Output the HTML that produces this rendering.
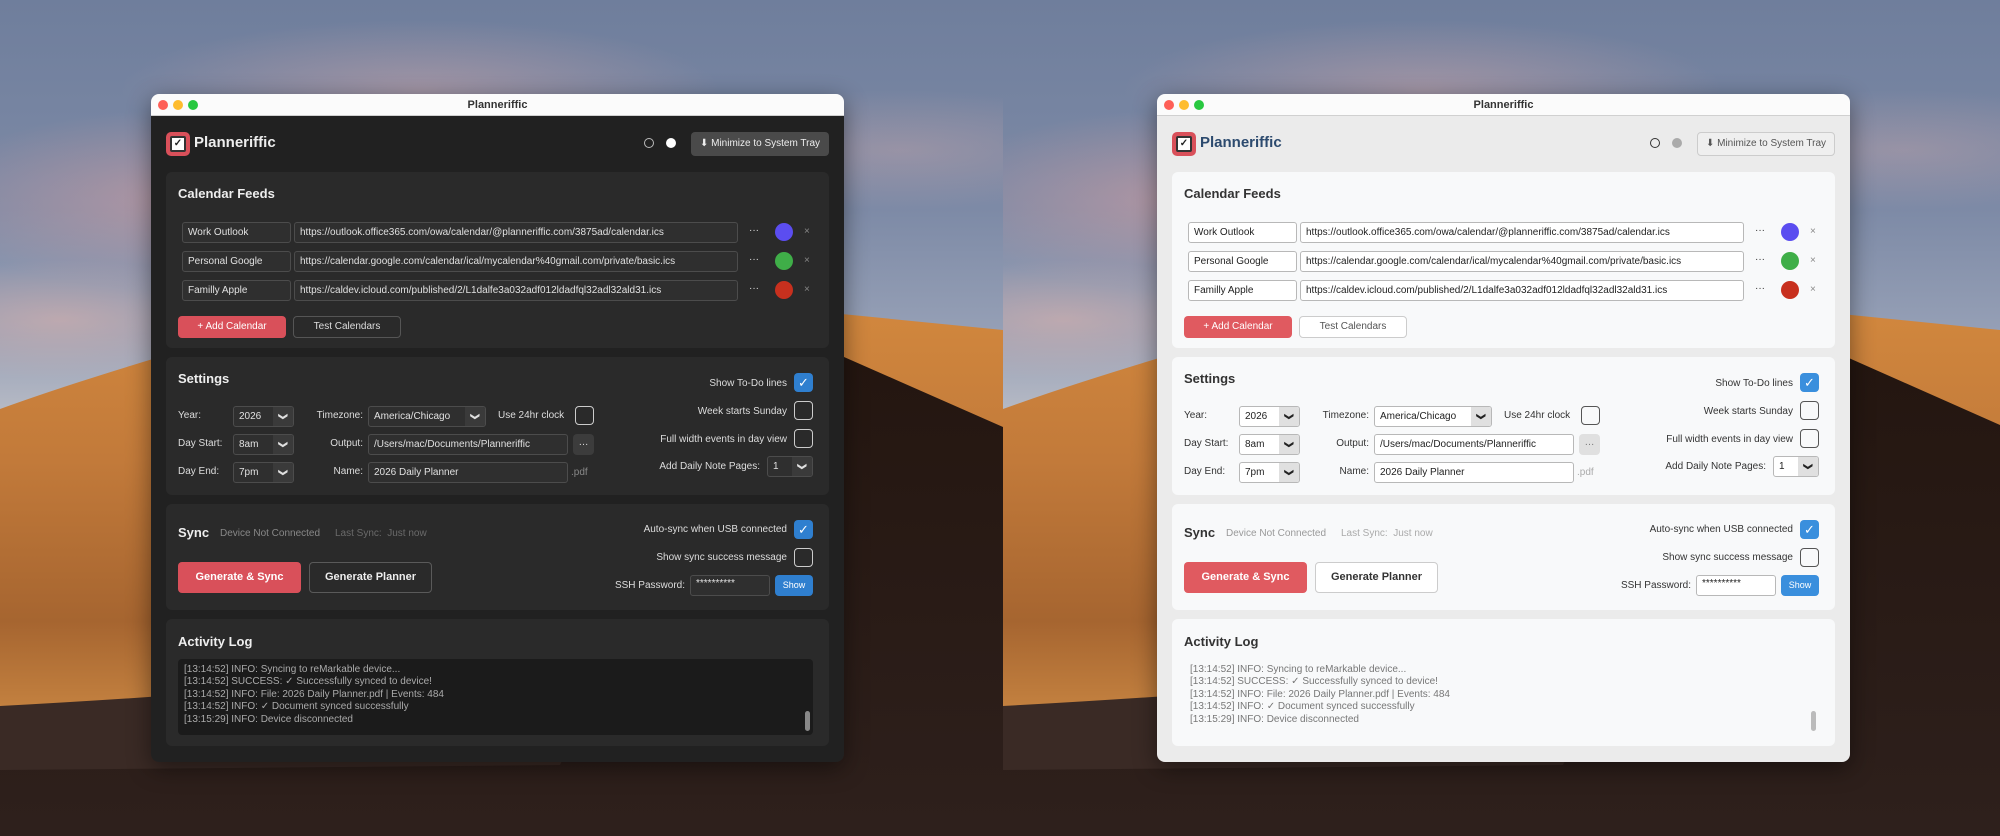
<!DOCTYPE html>
<html><head><meta charset="utf-8">
<style>
*{box-sizing:border-box;margin:0;padding:0}
body{width:2000px;height:836px;overflow:hidden;position:relative;font-family:"Liberation Sans",sans-serif;background:#2a1c18}
.half{position:absolute;top:0;width:1003px;height:836px;overflow:hidden}
.sky{position:absolute;inset:0;background:
 radial-gradient(ellipse 260px 90px at 180px 200px,rgba(220,160,160,.55),transparent),
 radial-gradient(ellipse 300px 70px at 420px 90px,rgba(215,170,170,.45),transparent),
 radial-gradient(ellipse 200px 60px at 60px 320px,rgba(230,180,170,.5),transparent),
 radial-gradient(ellipse 250px 60px at 900px 150px,rgba(210,170,170,.35),transparent),
 linear-gradient(180deg,#6f7e9c 0%,#7d8aa6 25%,#96a0b6 40%,#b9bcc6 50%,#c6c6cc 55%)}
.half svg{position:absolute;left:0;top:0}
.win{position:absolute;top:94px;width:693px;height:668px;border-radius:8px;overflow:hidden;box-shadow:0 6px 24px rgba(0,0,0,.45)}
.dark{color:#ddd}
.light{color:#333}
.tb{position:absolute;left:0;top:0;width:100%;height:22px;background:#fbfbfb;border-bottom:1px solid #d0d0d0;text-align:center;font-size:11px;font-weight:bold;line-height:22px;color:#333}
.tl{position:absolute;top:6px;width:10px;height:10px;border-radius:50%}
.a{position:absolute}
.panel{position:absolute;left:15px;width:663px;border-radius:6px}
.dark .panel{background:#2a2a2a}
.light .panel{background:#f8f9fa}
.h{position:absolute;font-size:13px;font-weight:bold}
.inp{position:absolute;height:21px;border-radius:3px;font-size:10px;line-height:19px;padding-left:5px;white-space:nowrap;overflow:hidden}
.dark .inp{background:#2f2f2f;border:1px solid #4c4c4c;color:#e0e0e0}
.light .inp{background:#fff;border:1px solid #b8b8b8;color:#222}
.sel .ar{position:absolute;right:0;top:0;width:20px;height:100%;font-size:9px;text-align:center;line-height:19px}
.sel .ar span{display:inline-block;transform:rotate(90deg);font-weight:bold}
.dark .sel .ar{background:#3a3a3a}
.light .sel .ar{background:#e0e0e0}
.lbl{position:absolute;font-size:10px;line-height:14px;white-space:nowrap}
.r{text-align:right}
.cb{position:absolute;width:19px;height:19px;border-radius:4px}
.dark .cb{border:1.5px solid #ccc}
.light .cb{border:1.5px solid #555}
.cb.on{background:#2f7fcf;border:none;color:#fff;text-align:center;font-size:13px;line-height:19px}
.light .cb.on{background:#3a8fdd}
.btn{position:absolute;border-radius:4px;text-align:center;font-size:10px}
.dot{position:absolute;width:18px;height:18px;border-radius:50%}
.muted{color:#888}
.log{position:absolute;left:27px;top:565px;width:635px;height:76px;border-radius:4px;font-size:10px;line-height:12.4px;padding:5px 6px}
.dark .log{background:#1b1b1b;color:#aaa}
.light .log{background:#f8f9fa;color:#777}
</style></head><body>
<svg width="0" height="0" style="position:absolute">
<defs>
<linearGradient id="og" x1="0" y1="0" x2="0" y2="1"><stop offset="0" stop-color="#d2883e"/><stop offset=".3" stop-color="#c27a3a"/><stop offset=".6" stop-color="#a66530"/><stop offset=".85" stop-color="#d39048"/><stop offset="1" stop-color="#9a5e30"/></linearGradient>
<linearGradient id="dg" x1="0" y1="0" x2="0" y2="1"><stop offset="0" stop-color="#23150f"/><stop offset="1" stop-color="#2e201c"/></linearGradient>
</defs></svg>

<div class="half" style="left:0">
<div class="sky"></div>
<svg width="1003" height="836">
<path d="M0 409 Q80 380 200 345 L700 300 L1003 330 L1003 836 L0 836Z" fill="url(#og)"/>
<path d="M0 706 Q300 690 700 650 L1003 620 L1003 836 L0 836Z" fill="#3a2a25"/>
<path d="M760 320 L1003 427 L1003 836 L0 836 L0 770 L560 765Z" fill="url(#dg)"/>
</svg>
</div>
<div class="half" style="left:1003px;width:997px">
<div class="sky"></div>
<svg width="997" height="836">
<path d="M0 409 Q80 380 200 345 L700 300 L997 330 L997 836 L0 836Z" fill="url(#og)"/>
<path d="M0 706 Q300 690 700 650 L997 620 L997 836 L0 836Z" fill="#3a2a25"/>
<path d="M760 320 L997 425 L997 836 L0 836 L0 770 L560 765Z" fill="url(#dg)"/>
</svg>
</div>

<!-- DARK WINDOW -->
<div class="win dark" style="left:151px">
 <div class="a" style="left:0;top:22px;width:693px;height:646px;background:#212121"></div>
 <div class="tb">Planneriffic<div class="tl" style="left:7px;background:#fe5f57"></div><div class="tl" style="left:22px;background:#febc2e"></div><div class="tl" style="left:37px;background:#28c840"></div></div>
 <div class="a" style="left:15px;top:38px;width:24px;height:24px;border-radius:5px;background:#d9505a"><div class="a" style="left:4px;top:4px;width:16px;height:16px;background:#fff;border:2px solid #333;border-radius:2px;font-size:10px;line-height:11px;text-align:center;color:#222;font-weight:bold">✓</div></div>
 <div class="a" style="left:43px;top:40px;font-size:15px;font-weight:bold;color:#eee">Planneriffic</div>
 <div class="a" style="left:493px;top:44px;width:10px;height:10px;border-radius:50%;border:1px solid #bbb"></div>
 <div class="a" style="left:515px;top:44px;width:10px;height:10px;border-radius:50%;background:#fff"></div>
 <div class="btn" style="left:540px;top:38px;width:138px;height:24px;background:#4a4a4a;color:#eee;line-height:24px">⬇ Minimize to System Tray</div>

 <div class="panel" style="top:78px;height:176px"></div>
 <div class="h" style="left:27px;top:92px;color:#eee">Calendar Feeds</div>
 <div class="inp" style="left:31px;top:128px;width:109px">Work Outlook</div>
 <div class="inp" style="left:143px;top:128px;width:444px">https://outlook.office365.com/owa/calendar/@planneriffic.com/3875ad/calendar.ics</div>
 <div class="lbl" style="left:598px;top:130px">···</div><div class="dot" style="left:624px;top:129px;background:#5b4df0"></div><div class="lbl muted" style="left:653px;top:131px">×</div>
 <div class="inp" style="left:31px;top:157px;width:109px">Personal Google</div>
 <div class="inp" style="left:143px;top:157px;width:444px">https://calendar.google.com/calendar/ical/mycalendar%40gmail.com/private/basic.ics</div>
 <div class="lbl" style="left:598px;top:159px">···</div><div class="dot" style="left:624px;top:158px;background:#3fae48"></div><div class="lbl muted" style="left:653px;top:160px">×</div>
 <div class="inp" style="left:31px;top:186px;width:109px">Familly Apple</div>
 <div class="inp" style="left:143px;top:186px;width:444px">https://caldev.icloud.com/published/2/L1dalfe3a032adf012ldadfql32adl32ald31.ics</div>
 <div class="lbl" style="left:598px;top:188px">···</div><div class="dot" style="left:624px;top:187px;background:#c8301e"></div><div class="lbl muted" style="left:653px;top:189px">×</div>
 <div class="btn" style="left:27px;top:222px;width:108px;height:22px;background:#d9505a;color:#fff;line-height:22px">+ Add Calendar</div>
 <div class="btn" style="left:142px;top:222px;width:108px;height:22px;border:1px solid #555;color:#ddd;line-height:20px">Test Calendars</div>

 <div class="panel" style="top:263px;height:138px"></div>
 <div class="h" style="left:27px;top:277px;color:#eee">Settings</div>
 <div class="lbl" style="left:27px;top:315px">Year:</div>
 <div class="inp sel" style="left:82px;top:312px;width:61px">2026<div class="ar"><span>❯</span></div></div>
 <div class="lbl" style="left:27px;top:343px">Day Start:</div>
 <div class="inp sel" style="left:82px;top:340px;width:61px">8am<div class="ar"><span>❯</span></div></div>
 <div class="lbl" style="left:27px;top:371px">Day End:</div>
 <div class="inp sel" style="left:82px;top:368px;width:61px">7pm<div class="ar"><span>❯</span></div></div>
 <div class="lbl r" style="left:140px;width:72px;top:315px">Timezone:</div>
 <div class="inp sel" style="left:217px;top:312px;width:118px">America/Chicago<div class="ar"><span>❯</span></div></div>
 <div class="lbl" style="left:347px;top:315px">Use 24hr clock</div>
 <div class="cb" style="left:424px;top:312px"></div>
 <div class="lbl r" style="left:140px;width:72px;top:343px">Output:</div>
 <div class="inp" style="left:217px;top:340px;width:200px">/Users/mac/Documents/Planneriffic</div>
 <div class="btn" style="left:422px;top:340px;width:21px;height:21px;background:#3c3c3c;line-height:17px">…</div>
 <div class="lbl r" style="left:140px;width:72px;top:371px">Name:</div>
 <div class="inp" style="left:217px;top:368px;width:200px">2026 Daily Planner</div>
 <div class="lbl muted" style="left:420px;top:372px">.pdf</div>
 <div class="lbl r" style="left:380px;width:256px;top:283px">Show To-Do lines</div><div class="cb on" style="left:643px;top:279px">✓</div>
 <div class="lbl r" style="left:380px;width:256px;top:311px">Week starts Sunday</div><div class="cb" style="left:643px;top:307px"></div>
 <div class="lbl r" style="left:380px;width:256px;top:339px">Full width events in day view</div><div class="cb" style="left:643px;top:335px"></div>
 <div class="lbl r" style="left:380px;width:229px;top:366px">Add Daily Note Pages:</div>
 <div class="inp sel" style="left:616px;top:362px;width:46px">1<div class="ar"><span>❯</span></div></div>

 <div class="panel" style="top:410px;height:106px"></div>
 <div class="h" style="left:27px;top:431px;color:#eee">Sync</div>
 <div class="lbl" style="left:69px;top:433px;color:#888">Device Not Connected</div>
 <div class="lbl" style="left:184px;top:433px;color:#6a6a6a">Last Sync:&nbsp; Just now</div>
 <div class="lbl r" style="left:380px;width:256px;top:429px">Auto-sync when USB connected</div><div class="cb on" style="left:643px;top:426px">✓</div>
 <div class="lbl r" style="left:380px;width:256px;top:457px">Show sync success message</div><div class="cb" style="left:643px;top:454px"></div>
 <div class="btn" style="left:27px;top:468px;width:123px;height:31px;background:#d9505a;color:#fff;line-height:31px;font-size:11px;font-weight:bold">Generate &amp; Sync</div>
 <div class="btn" style="left:158px;top:468px;width:123px;height:31px;border:1px solid #5a5a5a;color:#eee;line-height:29px;font-size:11px;font-weight:bold">Generate Planner</div>
 <div class="lbl r" style="left:400px;width:134px;top:485px">SSH Password:</div>
 <div class="inp" style="left:539px;top:481px;width:80px;line-height:15px">**********</div>
 <div class="btn" style="left:624px;top:481px;width:38px;height:21px;background:#2f7fcf;color:#fff;line-height:21px;font-size:9px">Show</div>

 <div class="panel" style="top:525px;height:127px"></div>
 <div class="h" style="left:27px;top:540px;color:#eee">Activity Log</div>
 <div class="log">[13:14:52] INFO: Syncing to reMarkable device...<br>[13:14:52] SUCCESS: ✓ Successfully synced to device!<br>[13:14:52] INFO: File: 2026 Daily Planner.pdf | Events: 484<br>[13:14:52] INFO: ✓ Document synced successfully<br>[13:15:29] INFO: Device disconnected</div>
 <div class="a" style="left:654px;top:617px;width:5px;height:20px;border-radius:3px;background:#888"></div>
</div>

<!-- LIGHT WINDOW -->
<div class="win light" style="left:1157px">
 <div class="a" style="left:0;top:22px;width:693px;height:646px;background:#ebebeb"></div>
 <div class="tb">Planneriffic<div class="tl" style="left:7px;background:#fe5f57"></div><div class="tl" style="left:22px;background:#febc2e"></div><div class="tl" style="left:37px;background:#28c840"></div></div>
 <div class="a" style="left:15px;top:38px;width:24px;height:24px;border-radius:5px;background:#d9505a"><div class="a" style="left:4px;top:4px;width:16px;height:16px;background:#fff;border:2px solid #333;border-radius:2px;font-size:10px;line-height:11px;text-align:center;color:#222;font-weight:bold">✓</div></div>
 <div class="a" style="left:43px;top:40px;font-size:15px;font-weight:bold;color:#2c4a6e">Planneriffic</div>
 <div class="a" style="left:493px;top:44px;width:10px;height:10px;border-radius:50%;border:1.5px solid #333"></div>
 <div class="a" style="left:515px;top:44px;width:10px;height:10px;border-radius:50%;background:#aaa"></div>
 <div class="btn" style="left:540px;top:38px;width:138px;height:24px;background:#efefef;border:1px solid #ccc;color:#555;line-height:22px">⬇ Minimize to System Tray</div>

 <div class="panel" style="top:78px;height:176px"></div>
 <div class="h" style="left:27px;top:92px;color:#333">Calendar Feeds</div>
 <div class="inp" style="left:31px;top:128px;width:109px">Work Outlook</div>
 <div class="inp" style="left:143px;top:128px;width:444px">https://outlook.office365.com/owa/calendar/@planneriffic.com/3875ad/calendar.ics</div>
 <div class="lbl" style="left:598px;top:130px">···</div><div class="dot" style="left:624px;top:129px;background:#5b4df0"></div><div class="lbl muted" style="left:653px;top:131px">×</div>
 <div class="inp" style="left:31px;top:157px;width:109px">Personal Google</div>
 <div class="inp" style="left:143px;top:157px;width:444px">https://calendar.google.com/calendar/ical/mycalendar%40gmail.com/private/basic.ics</div>
 <div class="lbl" style="left:598px;top:159px">···</div><div class="dot" style="left:624px;top:158px;background:#3fae48"></div><div class="lbl muted" style="left:653px;top:160px">×</div>
 <div class="inp" style="left:31px;top:186px;width:109px">Familly Apple</div>
 <div class="inp" style="left:143px;top:186px;width:444px">https://caldev.icloud.com/published/2/L1dalfe3a032adf012ldadfql32adl32ald31.ics</div>
 <div class="lbl" style="left:598px;top:188px">···</div><div class="dot" style="left:624px;top:187px;background:#c8301e"></div><div class="lbl muted" style="left:653px;top:189px">×</div>
 <div class="btn" style="left:27px;top:222px;width:108px;height:22px;background:#e05a60;color:#fff;line-height:22px">+ Add Calendar</div>
 <div class="btn" style="left:142px;top:222px;width:108px;height:22px;border:1px solid #ccc;background:#fff;color:#555;line-height:20px">Test Calendars</div>

 <div class="panel" style="top:263px;height:138px"></div>
 <div class="h" style="left:27px;top:277px;color:#333">Settings</div>
 <div class="lbl" style="left:27px;top:315px">Year:</div>
 <div class="inp sel" style="left:82px;top:312px;width:61px">2026<div class="ar"><span>❯</span></div></div>
 <div class="lbl" style="left:27px;top:343px">Day Start:</div>
 <div class="inp sel" style="left:82px;top:340px;width:61px">8am<div class="ar"><span>❯</span></div></div>
 <div class="lbl" style="left:27px;top:371px">Day End:</div>
 <div class="inp sel" style="left:82px;top:368px;width:61px">7pm<div class="ar"><span>❯</span></div></div>
 <div class="lbl r" style="left:140px;width:72px;top:315px">Timezone:</div>
 <div class="inp sel" style="left:217px;top:312px;width:118px">America/Chicago<div class="ar"><span>❯</span></div></div>
 <div class="lbl" style="left:347px;top:315px">Use 24hr clock</div>
 <div class="cb" style="left:424px;top:312px"></div>
 <div class="lbl r" style="left:140px;width:72px;top:343px">Output:</div>
 <div class="inp" style="left:217px;top:340px;width:200px">/Users/mac/Documents/Planneriffic</div>
 <div class="btn" style="left:422px;top:340px;width:21px;height:21px;background:#e0e0e0;color:#777;line-height:17px">…</div>
 <div class="lbl r" style="left:140px;width:72px;top:371px">Name:</div>
 <div class="inp" style="left:217px;top:368px;width:200px">2026 Daily Planner</div>
 <div class="lbl" style="left:420px;top:372px;color:#aaa">.pdf</div>
 <div class="lbl r" style="left:380px;width:256px;top:283px">Show To-Do lines</div><div class="cb on" style="left:643px;top:279px">✓</div>
 <div class="lbl r" style="left:380px;width:256px;top:311px">Week starts Sunday</div><div class="cb" style="left:643px;top:307px"></div>
 <div class="lbl r" style="left:380px;width:256px;top:339px">Full width events in day view</div><div class="cb" style="left:643px;top:335px"></div>
 <div class="lbl r" style="left:380px;width:229px;top:366px">Add Daily Note Pages:</div>
 <div class="inp sel" style="left:616px;top:362px;width:46px">1<div class="ar"><span>❯</span></div></div>

 <div class="panel" style="top:410px;height:106px"></div>
 <div class="h" style="left:27px;top:431px;color:#333">Sync</div>
 <div class="lbl" style="left:69px;top:433px;color:#999">Device Not Connected</div>
 <div class="lbl" style="left:184px;top:433px;color:#aaa">Last Sync:&nbsp; Just now</div>
 <div class="lbl r" style="left:380px;width:256px;top:429px">Auto-sync when USB connected</div><div class="cb on" style="left:643px;top:426px">✓</div>
 <div class="lbl r" style="left:380px;width:256px;top:457px">Show sync success message</div><div class="cb" style="left:643px;top:454px"></div>
 <div class="btn" style="left:27px;top:468px;width:123px;height:31px;background:#e05a60;color:#fff;line-height:31px;font-size:11px;font-weight:bold">Generate &amp; Sync</div>
 <div class="btn" style="left:158px;top:468px;width:123px;height:31px;border:1px solid #ccc;background:#fff;color:#333;line-height:29px;font-size:11px;font-weight:bold">Generate Planner</div>
 <div class="lbl r" style="left:400px;width:134px;top:485px">SSH Password:</div>
 <div class="inp" style="left:539px;top:481px;width:80px;line-height:15px">**********</div>
 <div class="btn" style="left:624px;top:481px;width:38px;height:21px;background:#3a8fdd;color:#fff;line-height:21px;font-size:9px">Show</div>

 <div class="panel" style="top:525px;height:127px"></div>
 <div class="h" style="left:27px;top:540px;color:#333">Activity Log</div>
 <div class="log">[13:14:52] INFO: Syncing to reMarkable device...<br>[13:14:52] SUCCESS: ✓ Successfully synced to device!<br>[13:14:52] INFO: File: 2026 Daily Planner.pdf | Events: 484<br>[13:14:52] INFO: ✓ Document synced successfully<br>[13:15:29] INFO: Device disconnected</div>
 <div class="a" style="left:654px;top:617px;width:5px;height:20px;border-radius:3px;background:#bbb"></div>
</div>
</body></html>
